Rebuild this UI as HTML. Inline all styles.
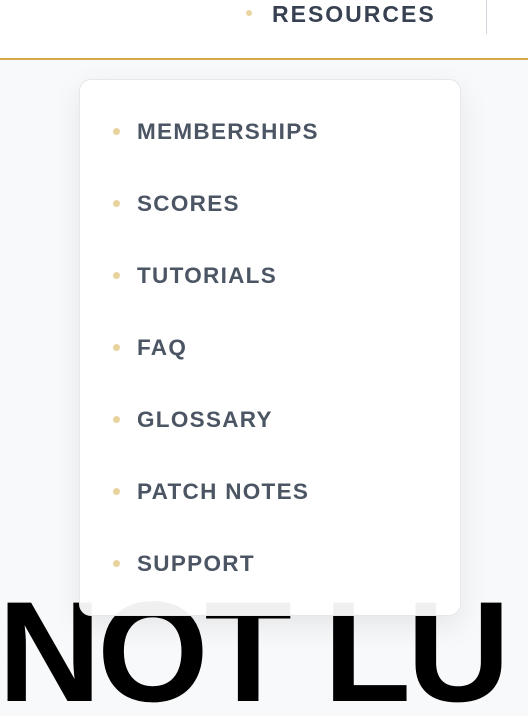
<!DOCTYPE html>
<html><head><style>
html,body{margin:0;padding:0;width:528px;height:716px;overflow:hidden}
body{position:relative;background:#f8f9fa;font-family:"Liberation Sans",sans-serif}
.hdr{position:absolute;left:0;top:0;width:528px;height:58px;background:#fff;border-bottom:2px solid #d4a84b}
.res{position:absolute;left:272px;top:0px;font-size:23px;font-weight:bold;letter-spacing:2px;color:#374151;line-height:28px}
.rdot{position:absolute;left:246px;top:10px;width:6px;height:6px;border-radius:50%;background:#ead5a2}
.sep{position:absolute;left:486px;top:0;width:1px;height:34px;background:#d1d5db}
.big{position:absolute;left:-2px;top:578px;font-size:143px;font-weight:bold;color:#000;letter-spacing:-4px;line-height:150px;white-space:nowrap}
.dd{position:absolute;left:79px;top:79px;width:380px;height:535px;background:rgba(255,255,255,0.94);border:1px solid #e5e7eb;border-radius:12px;box-shadow:0 10px 30px rgba(0,0,0,0.08)}
.it{position:absolute;left:57px;font-size:22.5px;font-weight:bold;color:#4b5563;letter-spacing:1.3px;line-height:26px}
.d{position:absolute;left:33px;width:7px;height:7px;border-radius:50%;background:#e8d39f}
</style></head><body>
<div class="hdr"><div class="rdot"></div><div class="res">RESOURCES</div><div class="sep"></div></div>
<div class="big">NOT LU</div>
<div class="dd">
<div class="d" style="top:48px"></div><div class="it" style="top:39px">MEMBERSHIPS</div>
<div class="d" style="top:120px"></div><div class="it" style="top:111px">SCORES</div>
<div class="d" style="top:192px"></div><div class="it" style="top:183px">TUTORIALS</div>
<div class="d" style="top:264px"></div><div class="it" style="top:255px">FAQ</div>
<div class="d" style="top:336px"></div><div class="it" style="top:327px">GLOSSARY</div>
<div class="d" style="top:408px"></div><div class="it" style="top:399px">PATCH NOTES</div>
<div class="d" style="top:480px"></div><div class="it" style="top:471px">SUPPORT</div>
</div>
</body></html>
